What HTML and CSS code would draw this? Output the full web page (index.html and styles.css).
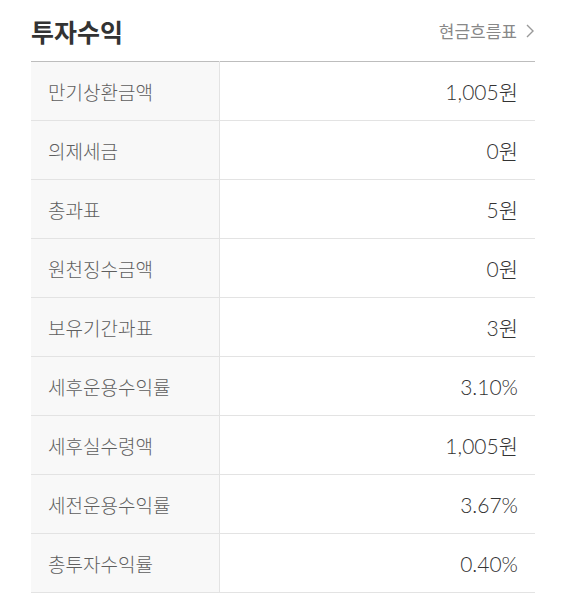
FILE: index.html
```html
<!DOCTYPE html>
<html lang="ko">
<head>
<meta charset="utf-8">
<link rel="stylesheet" href="styles.css">
</head>
<body>
<section class="panel">
  <header class="head">
    <h2 class="title">투자수익</h2>
    <a class="link">현금흐름표 <svg class="chev" width="10" height="16" viewBox="0 0 10 16"><path d="M2 2 L8 8 L2 14" fill="none" stroke="#999" stroke-width="1.4"/></svg></a>
  </header>
  <table class="tbl">
    <tr><th>만기상환금액</th><td>1,005원</td></tr>
    <tr><th>의제세금</th><td>0원</td></tr>
    <tr><th>총과표</th><td>5원</td></tr>
    <tr><th>원천징수금액</th><td>0원</td></tr>
    <tr><th>보유기간과표</th><td>3원</td></tr>
    <tr><th>세후운용수익률</th><td>3.10%</td></tr>
    <tr><th>세후실수령액</th><td>1,005원</td></tr>
    <tr><th>세전운용수익률</th><td>3.67%</td></tr>
    <tr><th>총투자수익률</th><td>0.40%</td></tr>
  </table>
</section>
</body>
</html>
```
FILE: styles.css
```css
html, body { margin: 0; padding: 0; background: #fff; }
body { font-family: Lato, "Noto Sans CJK KR", sans-serif; }
.panel { padding: 0 32px 0 31px; }
.head { display: flex; justify-content: space-between; align-items: center; height: 61px; box-sizing: border-box; }
.title { margin: 0; font-family: "Noto Sans CJK KR", sans-serif; font-weight: 700; font-size: 25px; color: #333; }
.link { display: flex; align-items: center; gap: 8px; font-family: "Noto Sans CJK KR", sans-serif; font-weight: 400; font-size: 17px; color: #888; text-decoration: none; }
.chev { display: block; }
.tbl { width: 100%; border-collapse: collapse; border-top: 1px solid #bdbdbd; }
.tbl tr { height: 59px; border-bottom: 1px solid #e3e3e3; }
.tbl th { width: 171px; text-align: left; font-weight: 300; background: #f8f8f8; border-right: 1px solid #e3e3e3; padding: 0 0 0 17px; font-family: "Noto Sans CJK KR", sans-serif; font-size: 19px; color: #5e5e5e; }
.tbl td { text-align: right; padding: 0 17px 0 0; font-size: 21px; font-weight: 300; color: #333; }
```
